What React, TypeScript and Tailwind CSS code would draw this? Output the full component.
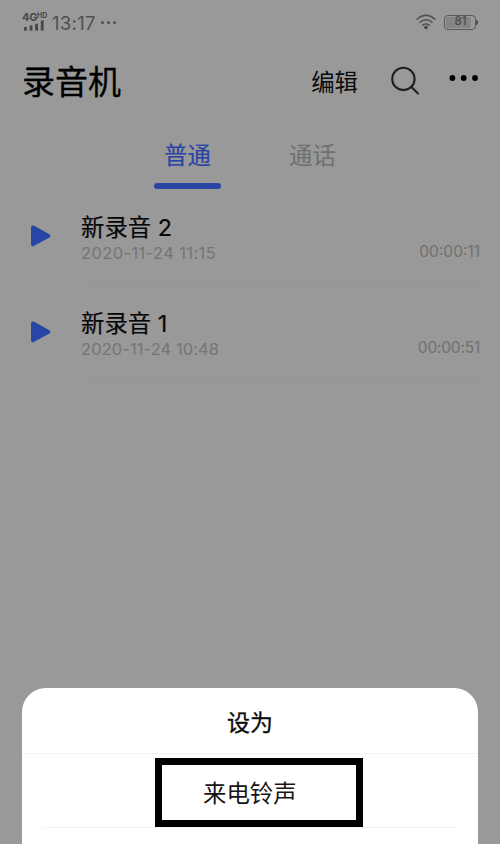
import React from "react";

type Recording = { name: string; date: string; length: string; dateTracking: string; lengthTracking: string };

const recordings: Recording[] = [
  { name: "新录音 2", date: "2020-11-24 11:15", length: "00:00:11", dateTracking: "tracking-[0.38px]", lengthTracking: "tracking-normal" },
  { name: "新录音 1", date: "2020-11-24 10:48", length: "00:00:51", dateTracking: "tracking-[0.08px]", lengthTracking: "tracking-[-0.2px]" },
];

function Signal() {
  return (
    <div className="flex h-[20px] w-[26px] flex-col">
      <div className="flex h-[10px] items-start font-bold text-[#484848]">
        <span className="text-[11px] leading-[11px] tracking-[-0.3px]">4G</span>
        <span className="text-[7px] leading-[7px]">HD</span>
      </div>
      <svg className="-mt-px overflow-visible" width="26" height="10" viewBox="0 0 26 10" fill="#484848">
        <rect x="2" y="6" width="2.8" height="3.6" />
        <rect x="7.6" y="4.4" width="2.8" height="5.2" />
        <rect x="13.2" y="2.8" width="2.8" height="6.8" />
        <rect x="18.8" y="-0.5" width="2.8" height="10.1" />
      </svg>
    </div>
  );
}

function Wifi() {
  return (
    <svg width="20" height="16" viewBox="0 0 20 16" fill="none" stroke="#505050" strokeWidth="1.5" strokeLinecap="round">
      <path d="M1 5.2Q10 -2.6 19 5.2" />
      <path d="M4 8.3Q10 3.2 16 8.3" />
      <path d="M6.8 11.2Q10 8.6 13.2 11.2" />
      <circle cx="10" cy="13.5" r="1.8" fill="#484848" stroke="none" />
    </svg>
  );
}

function Battery() {
  return (
    <div className="flex items-center">
      <div className="flex h-[15px] w-[32px] rounded-[4px] border border-[#595959] p-px">
        <div className="flex w-[25px] items-center justify-center rounded-[2px] bg-[#858585] pl-[4px] text-[11.5px] leading-none font-medium text-[#4b4b4b]">
          81
        </div>
      </div>
      <div className="h-[5px] w-[2px] rounded-r bg-[#505050]" />
    </div>
  );
}

function Row({ name, date, length, dateTracking, lengthTracking }: Recording) {
  return (
    <div className="flex h-[96px]">
      <div className="w-[81px] pt-[35px] pl-[30px]">
        <svg width="22" height="24" viewBox="0 0 22 24">
          <path d="M2.8 3.2L18.6 11.8L2.8 20.5Z" fill="#2a46a5" stroke="#2a46a5" strokeWidth="3.6" strokeLinejoin="round" />
        </svg>
      </div>
      <div className="mr-[20px] flex flex-1 justify-between border-b border-[#949494]">
        <div className="pt-[23px]">
          <div className="h-[30px] text-[23.4px] leading-[32px] whitespace-nowrap text-[#080808] [-webkit-text-stroke:0.2px_#080808]">{name}</div>
          <div className={`h-[22px] text-[16.5px] leading-[22px] whitespace-nowrap text-[#757575] ${dateTracking}`}>{date}</div>
        </div>
        <div className={`pt-[52px] text-[15.5px] leading-[22px] text-[#707070] ${lengthTracking}`}>{length}</div>
      </div>
    </div>
  );
}

export default function App() {
  return (
    <div className="relative h-[844px] w-[500px] overflow-hidden bg-[#999] font-[Inter,'Noto_Sans_CJK_SC',sans-serif]">
      <div className="flex h-[44px] items-center justify-between pr-[22px] pl-[22px]">
        <div className="flex items-center">
          <Signal />
          <span className="ml-[4px] pt-[2px] text-[18.5px] leading-none tracking-[0.3px] text-[#505050]">13:17</span>
          <span className="ml-[5px] flex gap-[3px] pt-px">
            <i className="size-[3px] rounded-full bg-[#505050]" />
            <i className="size-[3px] rounded-full bg-[#505050]" />
            <i className="size-[3px] rounded-full bg-[#505050]" />
          </span>
        </div>
        <div className="flex items-center gap-[8px]">
          <Wifi />
          <Battery />
        </div>
      </div>

      <div className="flex h-[74px] items-center border-b border-[#959595] pr-[21px] pl-[22px]">
        <h1 className="pt-[3px] text-[33px] leading-[74px] text-black [-webkit-text-stroke:0.3px_black]">录音机</h1>
        <span className="ml-auto pt-[5px] text-[23.4px] leading-[74px] text-[#0c0c0c]">编辑</span>
        <svg className="ml-[32px]" width="30" height="30" viewBox="0 0 30 30" fill="none" stroke="#202020" strokeWidth="2.1" strokeLinecap="round">
          <circle cx="13.4" cy="12.9" r="11.2" />
          <path d="M21.4 21L28 27.4" />
        </svg>
        <svg className="mb-[6px] ml-[29px]" width="30" height="8" viewBox="0 0 30 8">
          <circle cx="3.4" cy="4" r="2.9" />
          <circle cx="14.7" cy="4" r="2.9" />
          <circle cx="26" cy="4" r="2.9" />
        </svg>
      </div>

      <div className="flex h-[82px] pl-[154px] text-[23.4px] leading-[75px]">
        <div className="w-[67px] text-center text-[#2a46a5] [-webkit-text-stroke:0.2px_#2a46a5]">
          普通
          <div className="-mt-[10px] h-[6px] rounded-full bg-[#2a46a5]" />
        </div>
        <div className="ml-[58px] w-[67px] pl-[10px] text-[#707070]">通话</div>
      </div>

      <div className="-mt-[11px]">
        {recordings.map((r) => (
          <Row key={r.name} {...r} />
        ))}
      </div>

      <div className="absolute top-[688px] left-[22px] h-[180px] w-[456px] rounded-t-[24px] bg-white">
        <div className="h-[66px] border-b border-[#f3f3f3] text-center text-[23px] leading-[70px] text-[#0b0b0b] [-webkit-text-stroke:0.3px_#0b0b0b]">设为</div>
        <div className="mx-[21px] h-[74px] border-b border-[#f3f3f3] pl-[160px] text-[23.4px] leading-[79px] text-[#161616]">来电铃声</div>
        <div className="absolute top-[70px] left-[133px] h-[69px] w-[207.5px] border-[7px] border-black" />
      </div>
    </div>
  );
}
